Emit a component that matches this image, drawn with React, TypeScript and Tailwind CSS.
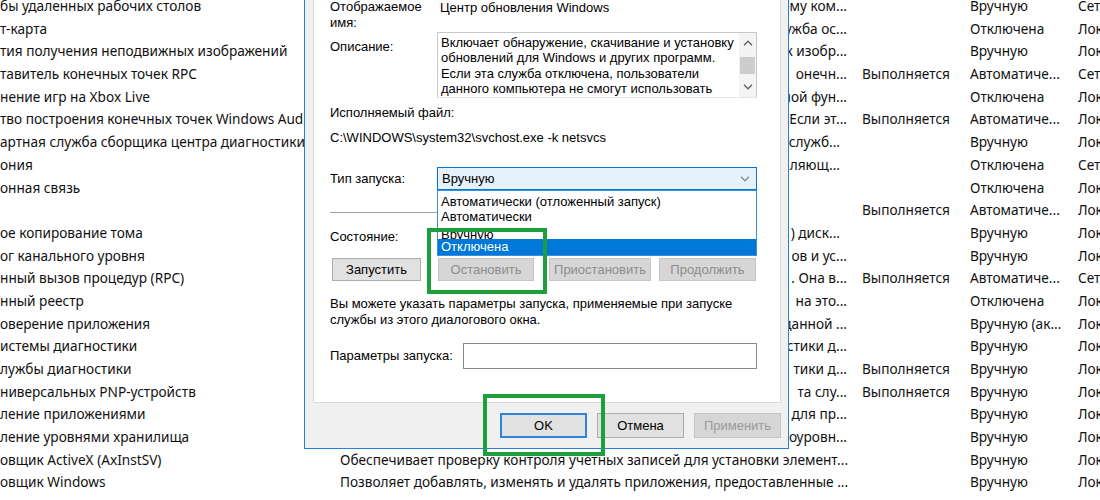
import React from "react";

type Row = { name: string; desc: string; full?: boolean; short?: boolean; status: string; type: string; logon: string };

const S = "Сетевая служба";
const L = "Локальная система";
const R = "Выполняется";
const M = "Вручную";
const D = "Отключена";
const A = "Автоматиче...";

const rows: Row[] = [
  { name: "бы удаленных рабочих столов", desc: "ому ком...", status: "", type: M, logon: S },
  { name: "т-карта", desc: "лужба ос...", status: "", type: D, logon: L },
  { name: "тия получения неподвижных изображений", desc: "ок изобр...", status: "", type: M, logon: L },
  { name: "тавитель конечных точек RPC", desc: "онечн...", status: R, type: A, logon: S },
  { name: "нение игр на Xbox Live", desc: "ной фун...", status: "", type: D, logon: L },
  { name: "тво построения конечных точек Windows Audio", desc: " Если эт...", status: R, type: A, logon: L },
  { name: "артная служба сборщика центра диагностики Microsoft", desc: " служб...", short: true, status: "", type: M, logon: L },
  { name: "ония", desc: "ляющ...", short: true, status: "", type: D, logon: S },
  { name: "онная связь", desc: "", status: "", type: D, logon: L },
  { name: "", desc: "", status: R, type: A, logon: L },
  { name: "ое копирование тома", desc: " ) диск...", short: true, status: "", type: M, logon: L },
  { name: "ог канального уровня", desc: "ов и ус...", status: "", type: M, logon: L },
  { name: "нный вызов процедур (RPC)", desc: ". Она в...", status: R, type: A, logon: S },
  { name: "нный реестр", desc: " на это...", status: "", type: D, logon: L },
  { name: "оверение приложения", desc: "данной ...", status: "", type: "Вручную (ак...", logon: L },
  { name: "истемы диагностики", desc: "стики д...", status: "", type: M, logon: L },
  { name: "лужбы диагностики", desc: "тики д...", status: R, type: M, logon: L },
  { name: "ниверсальных PNP-устройств", desc: "та слу...", status: R, type: M, logon: L },
  { name: "ление приложениями", desc: "для пр...", status: "", type: M, logon: L },
  { name: "ление уровнями хранилища", desc: "оуровн...", status: "", type: M, logon: L },
  { name: "овщик ActiveX (AxInstSV)", desc: "Обеспечивает проверку контроля учетных записей для установки элемент...", full: true, status: "", type: M, logon: L },
  { name: "овщик Windows", desc: "Позволяет добавлять, изменять и удалять приложения, предоставленные ...", full: true, status: "", type: M, logon: L },
];

function Chevron({ up, className }: { up?: boolean; className?: string }) {
  return (
    <svg viewBox="0 0 10 6" className={className} fill="none" stroke="currentColor" strokeWidth="1.3">
      <path d={up ? "M1 5.2 L5 1.2 L9 5.2" : "M1 0.8 L5 4.8 L9 0.8"} />
    </svg>
  );
}

function descClass(r: Row) {
  if (r.full) return "overflow-hidden pr-[14px]";
  if (r.short) return "overflow-hidden pr-[22px] text-right";
  return "overflow-hidden pr-[15px] text-right";
}

export default function App() {
  return (
    <div className="relative w-[1100px] h-[500px] overflow-hidden bg-white">
      <div className="-mt-[5px] font-['Noto_Sans',sans-serif] text-[13.65px] text-[#111]">
        {rows.map((r, i) => (
          <div
            key={i}
            className="grid grid-cols-[340px_522px_108px_108px_22px] h-[22.7px] leading-[22.7px] whitespace-nowrap"
          >
            <div className="overflow-hidden">{r.name}</div>
            <div className={descClass(r)}>{r.desc}</div>
            <div>{r.status}</div>
            <div className="overflow-hidden">{r.type}</div>
            <div className="overflow-hidden">{r.logon}</div>
          </div>
        ))}
      </div>

      {/* Dialog */}
      <div className="absolute left-[304px] top-[-30px] w-[485px] border border-[#2a80d2] bg-[#f0f0f0] pl-[8px] pr-[7px] pt-[8px] pb-[10px] font-['Liberation_Sans',Arial,sans-serif] text-[13px] text-black">
        <div className="border border-[#d9d9d9] bg-white pl-[16px] pr-[23px] pt-[19px] pb-[33px]">
          <div className="flex h-[33px]">
            <div className="w-[107px] leading-[16px]">
              Отображаемое
              <br />
              имя:
            </div>
            <div className="leading-[16px] pl-[3px] pt-[1px]">Центр обновления Windows</div>
          </div>

          <div className="flex h-[66px]">
            <div className="w-[107px] pt-[7px] leading-[16px]">Описание:</div>
            <div className="flex flex-1 border border-[#c8c8c8] border-b-[#e4e4e4]">
              <div className="flex-1 overflow-hidden pl-[3px] pt-[2px] leading-[15.3px] whitespace-nowrap">
                Включает обнаружение, скачивание и установку
                <br />
                обновлений для Windows и других программ.
                <br />
                Если эта служба отключена, пользователи
                <br />
                данного компьютера не смогут использовать
              </div>
              <div className="flex w-[17px] flex-col bg-[#f4f4f4] text-[#606060]">
                <div className="flex h-[20px] items-center justify-center">
                  <Chevron up className="h-[6px] w-[10px]" />
                </div>
                <div className="mx-[1px] mt-[4px] h-[17px] bg-[#cdcdcd]" />
                <div className="flex-1" />
                <div className="flex h-[20px] items-center justify-center">
                  <Chevron className="h-[6px] w-[10px]" />
                </div>
              </div>
            </div>
          </div>

          <div className="mt-[7px] leading-[16px]">Исполняемый файл:</div>
          <div className="mt-[9px] leading-[16px]">C:\WINDOWS\system32\svchost.exe -k netsvcs</div>

          <div className="mt-[21px] flex h-[23px] items-center">
            <div className="w-[107px] leading-[16px]">Тип запуска:</div>
            <div className="relative flex h-full flex-1 items-center justify-between border border-[#0078d7] bg-[#e5f1fb] pl-[4px] pr-[6px]">
              <span className="leading-[16px]">Вручную</span>
              <Chevron className="h-[6px] w-[10px] text-[#8a8a8a]" />
              <div className="absolute -left-[1px] -right-[1px] top-[22px] z-10 border border-[#3b8fdc] bg-white pt-[3px]">
                <div className="h-[15px] pl-[3px] leading-[15px]">Автоматически (отложенный запуск)</div>
                <div className="h-[15px] pl-[3px] leading-[15px]">Автоматически</div>
                <div className="h-[15px] overflow-hidden pl-[3px] leading-[15px]">
                  <div className="translate-y-[3px]">Вручную</div>
                </div>
                <div className="h-[16px] bg-[#0078d7] pl-[3px] leading-[16px] text-white">Отключена</div>
              </div>
            </div>
          </div>

          <div className="mt-[22px] h-px bg-[#a0a0a0]" />

          <div className="mt-[16px] leading-[16px]">Состояние:</div>

          <div className="mt-[13px] flex h-[23px]">
            <div className="ml-[2px] flex w-[89px] items-center justify-center border border-[#adadad] bg-[#e1e1e1]">Запустить</div>
            <div className="ml-[17px] flex w-[96px] items-center justify-center border border-[#c4c4c4] bg-[#d6d6d6] text-[#8d8d8d]">Остановить</div>
            <div className="ml-[15px] flex w-[102px] items-center justify-center border border-[#c4c4c4] bg-[#d6d6d6] text-[#8d8d8d]">Приостановить</div>
            <div className="ml-[8px] flex w-[97px] items-center justify-center border border-[#c4c4c4] bg-[#d6d6d6] text-[#8d8d8d]">Продолжить</div>
          </div>

          <div className="mt-[15px] leading-[16px]">
            Вы можете указать параметры запуска, применяемые при запуске
            <br />
            службы из этого диалогового окна.
          </div>

          <div className="mt-[15px] flex h-[26px] items-center">
            <div className="leading-[16px]">Параметры запуска:</div>
            <div className="ml-auto h-full w-[294px] border border-[#8a8a8a] bg-white" />
          </div>
        </div>

        <div className="mt-[10px] flex justify-end gap-[10px]">
          <div className="flex h-[25px] w-[87px] items-center justify-center border-2 border-[#2f84d8] bg-[#e1e1e1]">OK</div>
          <div className="flex h-[25px] w-[87px] items-center justify-center border border-[#adadad] bg-[#e1e1e1]">Отмена</div>
          <div className="flex h-[25px] w-[87px] items-center justify-center border border-[#c4c4c4] bg-[#d6d6d6] text-[#9a9a9a]">Применить</div>
        </div>
      </div>

      {/* Green highlight frames */}
      <div className="absolute left-[427px] top-[228px] z-20 h-[66px] w-[120px] border-4 border-[#1f9e3e]" />
      <div className="absolute left-[483px] top-[394px] z-20 h-[62px] w-[122px] border-4 border-[#1f9e3e]" />
    </div>
  );
}
